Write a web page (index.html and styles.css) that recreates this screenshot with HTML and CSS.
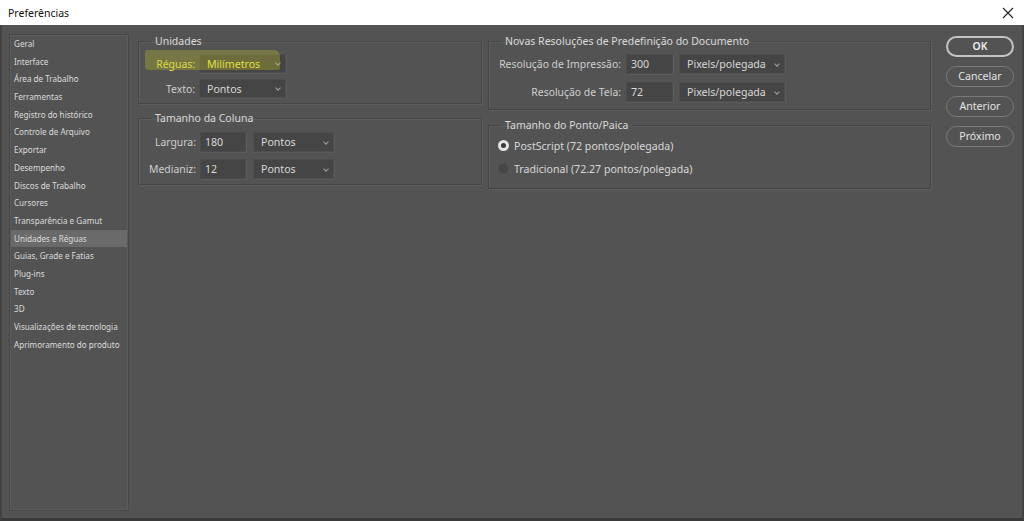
FILE: index.html
```html
<!DOCTYPE html>
<html lang="pt">
<head>
<meta charset="utf-8">
<title>Preferências</title>
<link rel="stylesheet" href="styles.css">
</head>
<body>
<div class="window">
  <div class="titlebar">
    <span class="title">Preferências</span>
    <svg class="close" width="12" height="12" viewBox="0 0 12 12"><path d="M1 1 L11 11 M11 1 L1 11" stroke="#222" stroke-width="1.1" fill="none"/></svg>
  </div>
  <div class="content">
    <ul class="sidebar">
      <li>Geral</li>
      <li>Interface</li>
      <li>Área de Trabalho</li>
      <li>Ferramentas</li>
      <li>Registro do histórico</li>
      <li>Controle de Arquivo</li>
      <li>Exportar</li>
      <li>Desempenho</li>
      <li>Discos de Trabalho</li>
      <li>Cursores</li>
      <li>Transparência e Gamut</li>
      <li class="active">Unidades e Réguas</li>
      <li>Guias, Grade e Fatias</li>
      <li>Plug-ins</li>
      <li>Texto</li>
      <li>3D</li>
      <li>Visualizações de tecnologia</li>
      <li>Aprimoramento do produto</li>
    </ul>

    <div class="col col1">
      <fieldset class="group g-units">
        <legend>Unidades</legend>
        <div class="rows units-rows">
          <span class="lbl hl-text">Réguas:</span>
          <div class="select w87"><span class="hl-text2">Milímetros</span><i class="chev"></i></div>
          <span class="lbl">Texto:</span>
          <div class="select w87"><span>Pontos</span><i class="chev"></i></div>
        </div>
        <span class="marker"></span>
      </fieldset>

      <fieldset class="group g-col">
        <legend>Tamanho da Coluna</legend>
        <div class="rows col-rows">
          <span class="lbl">Largura:</span>
          <div class="input w46">180</div>
          <div class="select w81 tall"><span>Pontos</span><i class="chev"></i></div>
          <span class="lbl">Medianiz:</span>
          <div class="input w46">12</div>
          <div class="select w81 tall"><span>Pontos</span><i class="chev"></i></div>
        </div>
      </fieldset>
    </div>

    <div class="col col2">
      <fieldset class="group g-res">
        <legend>Novas Resoluções de Predefinição do Documento</legend>
        <div class="rows res-rows">
          <span class="lbl">Resolução de Impressão:</span>
          <div class="input w47">300</div>
          <div class="select w106 tall"><span>Pixels/polegada</span><i class="chev"></i></div>
          <span class="lbl">Resolução de Tela:</span>
          <div class="input w47">72</div>
          <div class="select w106 tall"><span>Pixels/polegada</span><i class="chev"></i></div>
        </div>
      </fieldset>

      <fieldset class="group g-pt">
        <legend>Tamanho do Ponto/Paica</legend>
        <label class="radio"><span class="dot on"></span>PostScript (72 pontos/polegada)</label>
        <label class="radio"><span class="dot"></span>Tradicional (72.27 pontos/polegada)</label>
      </fieldset>
    </div>

    <div class="buttons">
      <button class="btn primary">OK</button>
      <button class="btn">Cancelar</button>
      <button class="btn">Anterior</button>
      <button class="btn">Próximo</button>
    </div>
  </div>
</div>
</body>
</html>
```

FILE: styles.css
```css
* { box-sizing: border-box; }
html, body { margin: 0; padding: 0; }
body {
  width: 1024px;
  height: 521px;
  overflow: hidden;
  background: #535353;
  font-family: "Noto Sans", "Open Sans", "DejaVu Sans", sans-serif;
}
.window {
  width: 1024px;
  height: 521px;
  display: flex;
  flex-direction: column;
  border-left: 2px solid #424242;
  border-right: 2px solid #424242;
  border-bottom: 3px solid #3a3a3a;
}
.titlebar {
  height: 25px;
  margin: 0 -2px;
  background: #ffffff;
  display: flex;
  align-items: center;
  justify-content: space-between;
  padding: 0 10px 0 8px;
  flex: none;
}
.title { font-size: 10.5px; color: #111; }
.close { display: block; }

.content {
  flex: 1;
  display: flex;
  align-items: flex-start;
  padding: 9px 0 0 7px;
  background: #535353;
}

/* sidebar */
.sidebar {
  list-style: none;
  margin: 0;
  padding: 0 1px;
  width: 120px;
  height: 477px;
  border: 1px solid #474747;
  box-shadow: inset 1px 1px 0 #5b5b5b, inset -1px -1px 0 #5b5b5b;
  flex: none;
}
.sidebar li {
  height: 17.7px;
  line-height: 17.7px;
  padding-left: 3px;
  font-size: 8.1px;
  color: #dcdcdc;
  white-space: nowrap;
}
.sidebar li.active { background: #6a6a6a; }

.col { display: flex; flex-direction: column; flex: none; }
.col1 { width: 344px; margin-left: 9px; gap: 7px; }
.col2 { width: 443px; margin-left: 6px; gap: 8px; }

.group {
  position: relative;
  margin: 0;
  padding: 0 8px;
  border: 1px solid #464646;
  box-shadow: 1px 1px 0 #5c5c5c, inset 1px 1px 0 #5c5c5c;
  min-width: 0;
}
.group legend {
  margin-left: 4px;
  padding: 0 4px;
  font-size: 10.5px;
  line-height: 14px;
  color: #dadada;
}

.rows { display: grid; align-items: center; }
.lbl {
  font-size: 10.4px;
  color: #cfcfcf;
  text-align: right;
  white-space: nowrap;
}
.units-rows {
  grid-template-columns: 48px 87px;
  column-gap: 4px;
  row-gap: 6px;
  padding: 6px 0 5px;
}
.col-rows {
  grid-template-columns: 49px 46px 81px;
  column-gap: 4px;
  row-gap: 7px;
  padding: 7px 0 5px;
}
.col-rows .select { margin-left: 3px; }
.res-rows {
  grid-template-columns: 124px 47px 106px;
  column-gap: 5px;
  row-gap: 8px;
  padding: 6px 0 7px;
}
.res-rows .select { margin-left: 1px; }

.select {
  height: 19px;
  background: #454545;
  border: 1px solid #4e4e4e;
  box-shadow: 1px 1px 0 #5a5a5a;
  display: flex;
  align-items: center;
  justify-content: space-between;
  padding: 0 5px 0 7px;
  font-size: 10.6px;
  color: #d8d8d8;
  position: relative;
  z-index: 1;
}
.select.tall { height: 20px; }
.input {
  height: 20px;
  background: #454545;
  border: 1px solid #4b4b4b;
  box-shadow: 1px 1px 0 #5c5c5c;
  padding: 0 4px;
  font-size: 10.6px;
  line-height: 18px;
  color: #d8d8d8;
}
.w87 { width: 87px; }
.w81 { width: 81px; }
.w46 { width: 46px; }
.w47 { width: 47px; }
.w106 { width: 106px; }

.chev {
  width: 4px;
  height: 4px;
  border-right: 1px solid #a0a0a0;
  border-bottom: 1px solid #a0a0a0;
  transform: rotate(45deg);
  margin-top: -1px;
}

/* yellow highlighter over Réguas row */
.marker {
  position: absolute;
  left: 6px;
  top: 2px;
  width: 135px;
  height: 20px;
  border-radius: 3px 6px 2px 4px;
  background: rgba(196, 196, 40, 0.32);
  z-index: 2;
  pointer-events: none;
}
.hl-text { color: #e2e24a; }
.hl-text2 { color: #ecec50; }

.g-pt { padding: 2px 8px 8px 8px; }
.radio {
  display: flex;
  align-items: center;
  gap: 5px;
  height: 23px;
  font-size: 10.6px;
  color: #d8d8d8;
}
.dot {
  width: 11px;
  height: 11px;
  border-radius: 50%;
  background: #464646;
  border: 1px solid #4f4f4f;
  flex: none;
  margin-left: 1px;
}
.dot.on {
  background: #3a3a3a;
  border: 3.5px solid #e4e4e4;
}

.buttons {
  display: flex;
  flex-direction: column;
  gap: 9px;
  margin-left: 15px;
  margin-top: 2px;
  width: 68px;
  flex: none;
}
.btn {
  height: 21px;
  border-radius: 11px;
  background: #535353;
  border: 1.5px solid #7a7a7a;
  color: #e4e4e4;
  font-family: "Noto Sans", "Open Sans", sans-serif;
  font-size: 10.6px;
  padding: 0;
  line-height: 17px;
}
.btn.primary {
  border: 2px solid #c4c4c4;
  font-weight: 600;
  font-size: 10.4px;
  color: #eeeeee;
}
```
